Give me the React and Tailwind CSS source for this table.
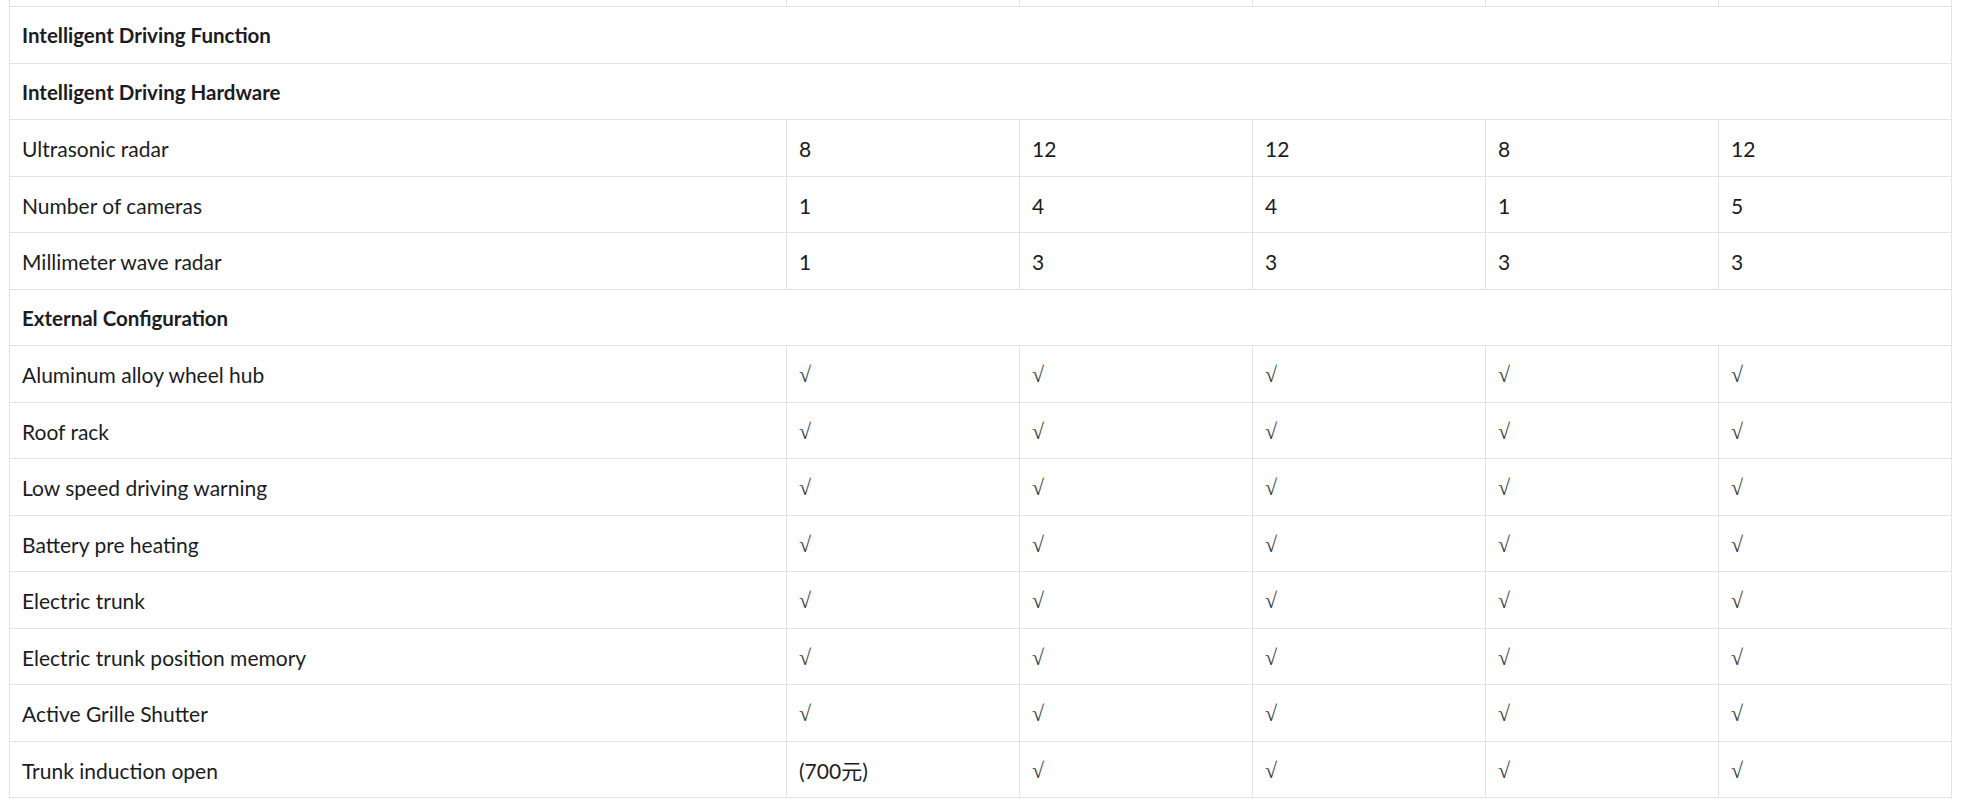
import React from 'react';

const CHECK = '√';

const rows = [
  { section: 'Intelligent Driving Function' },
  { section: 'Intelligent Driving Hardware' },
  { label: 'Ultrasonic radar', values: ['8', '12', '12', '8', '12'] },
  { label: 'Number of cameras', values: ['1', '4', '4', '1', '5'] },
  { label: 'Millimeter wave radar', values: ['1', '3', '3', '3', '3'] },
  { section: 'External Configuration' },
  { label: 'Aluminum alloy wheel hub', values: [CHECK, CHECK, CHECK, CHECK, CHECK] },
  { label: 'Roof rack', values: [CHECK, CHECK, CHECK, CHECK, CHECK] },
  { label: 'Low speed driving warning', values: [CHECK, CHECK, CHECK, CHECK, CHECK] },
  { label: 'Battery pre heating', values: [CHECK, CHECK, CHECK, CHECK, CHECK] },
  { label: 'Electric trunk', values: [CHECK, CHECK, CHECK, CHECK, CHECK] },
  { label: 'Electric trunk position memory', values: [CHECK, CHECK, CHECK, CHECK, CHECK] },
  { label: 'Active Grille Shutter', values: [CHECK, CHECK, CHECK, CHECK, CHECK] },
  { label: 'Trunk induction open', values: ['(700元)', CHECK, CHECK, CHECK, CHECK] },
];

const Cell = ({ children }) => {
  const isCheck = children === CHECK;
  return (
    <div className="w-[233px] shrink-0 h-full border-r border-[#e2e2e7] flex items-center pl-3 pt-[2px]">
      {isCheck ? (
        <span className="text-[#3a3f47] text-[22px] font-['Liberation_Serif',serif]">{children}</span>
      ) : (
        <span>{children}</span>
      )}
    </div>
  );
};

export default function App() {
  return (
    <div className="bg-white min-h-screen px-[9px] text-[#1c1c1f] text-[21px] font-['Lato','Noto_Sans_CJK_SC',sans-serif]">
      <div className="w-[1943px]">
        {/* tail of the previous row */}
        <div className="flex h-[7px] border-b border-[#e2e2e7]">
          <div className="w-[778px] shrink-0 h-full border-l border-r border-[#e2e2e7]" />
          {[0, 1, 2, 3, 4].map(i => (
            <div key={i} className="w-[233px] shrink-0 h-full border-r border-[#e2e2e7]" />
          ))}
        </div>

        {rows.map((row, idx) =>
          row.section ? (
            <div key={idx} className="flex items-center h-[56.5px] border-b border-l border-r border-[#e2e2e7] pl-3 pt-[2px] font-bold text-[20.5px]">
              {row.section}
            </div>
          ) : (
            <div key={idx} className="flex h-[56.5px] border-b border-[#e2e2e7]">
              <div className="w-[778px] shrink-0 h-full border-l border-r border-[#e2e2e7] flex items-center pl-3 pt-[2px]">
                {row.label}
              </div>
              {row.values.map((v, i) => (
                <Cell key={i}>{v}</Cell>
              ))}
            </div>
          )
        )}
      </div>
    </div>
  );
}
